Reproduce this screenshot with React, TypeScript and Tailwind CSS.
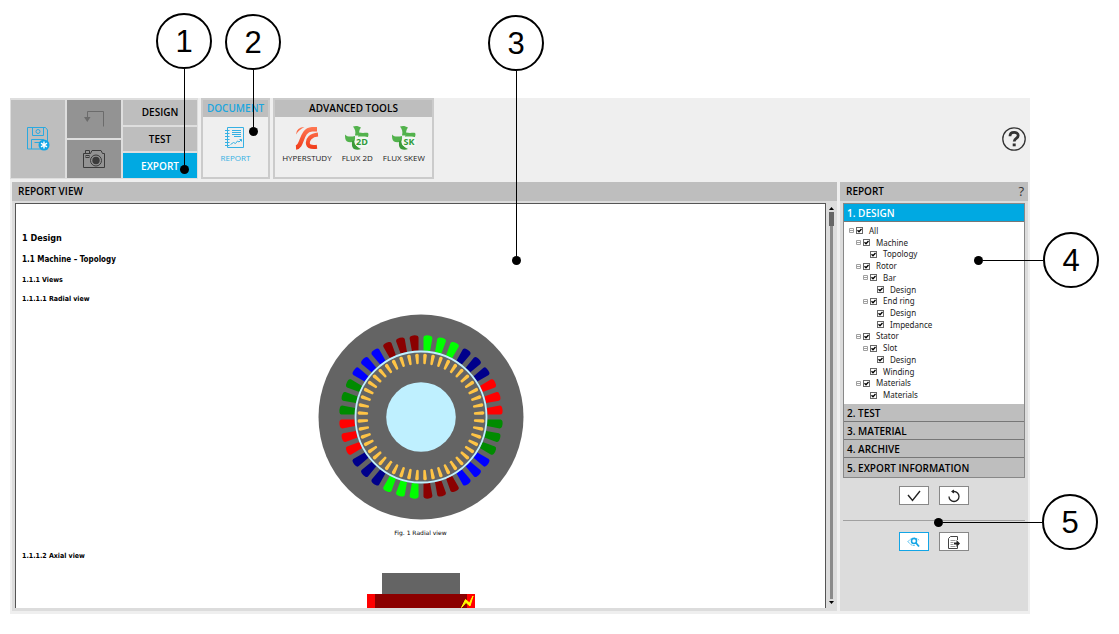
import React, { useState } from "react";

/* ---------- callouts ---------- */

function Badge({ n }: { n: number }) {
  return (
    <span className="flex size-14 shrink-0 items-center justify-center rounded-full border-2 border-black bg-white font-['Liberation_Sans',sans-serif] text-[31px] leading-none text-black">
      {n}
    </span>
  );
}

function Dot() {
  return <span className="size-[9px] shrink-0 rounded-full bg-black" />;
}

function DownCallout({ n, place }: { n: number; place: string }) {
  return (
    <div className={`pointer-events-none absolute flex flex-col items-center ${place}`}>
      <Badge n={n} />
      <span className="w-px flex-1 bg-black" />
      <Dot />
    </div>
  );
}

function SideCallout({ n, place }: { n: number; place: string }) {
  return (
    <div className={`pointer-events-none absolute flex items-center ${place}`}>
      <Dot />
      <span className="h-px flex-1 bg-black" />
      <Badge n={n} />
    </div>
  );
}

/* ---------- icons ---------- */

function SaveIcon() {
  return (
    <svg width="24" height="26" viewBox="0 0 24 26" fill="none" stroke="#2aa9e0" strokeWidth="1">
      <path d="M1.5 1.5h18l2 2.500v19h-20z" />
      <path d="M6.500 1.500v8h11v-8M5.500 23v-9.500h12v3M8.500 16.500h6" />
      <circle cx="12" cy="5.500" r="2" />
      <circle cx="18" cy="19" r="5.500" fill="#12a5e6" stroke="none" />
      <path d="M18 15.500v7M15 17.200l6 3.600M21 17.200l-6 3.600" stroke="#fff" strokeWidth="1.400" />
    </svg>
  );
}

function UndoIcon() {
  return (
    <svg width="22" height="18" viewBox="0 0 22 18" fill="none" stroke="#6b6b6b">
      <path d="M4.500 8V1.500h16v15" />
      <path d="M1 7h6.500l-3.200 5z" fill="#6b6b6b" stroke="none" />
    </svg>
  );
}

function CameraIcon() {
  return (
    <svg width="24" height="20" viewBox="0 0 24 20" fill="none" stroke="#3b3b3b">
      <path d="M1.500 4.500h7l1.500-3h9l1.500 3h2v14h-21zM3.500 4V1.500h4V4" />
      <rect x="4" y="6.500" width="3" height="2" />
      <circle cx="14" cy="11.500" r="5.500" />
      <circle cx="14" cy="11.500" r="3.700" fill="#3b3b3b" stroke="none" />
    </svg>
  );
}

function ReportIcon() {
  return (
    <svg width="20" height="24" viewBox="0 0 20 24" fill="none" stroke="#35b0e3">
      <path d="M2.500 1.500h16v20h-16z" />
      <path d="M0 4.500h4.500M0 7.500h4.500M0 10.500h4.500M0 13.500h4.500M0 16.500h4.500M0 19.500h4.500" strokeWidth="1.200" />
      <path d="M7 4.500h9M7 6.500h9M7 8.500h9M9 10.500h7" />
      <path d="M5.500 18.500l3-2 2 1 2-2.500 1.500 1 2.500-2.500M14.500 13.500h2v2" />
    </svg>
  );
}

function HyperStudyIcon() {
  return (
    <svg width="24" height="24" viewBox="0 0 24 24" fill="none">
      <defs>
        <linearGradient id="hs" gradientUnits="userSpaceOnUse" x1="0" y1="0" x2="0" y2="24">
          <stop offset="0" stopColor="#ff7a55" />
          <stop offset="1" stopColor="#f03a18" />
        </linearGradient>
      </defs>
      <path d="M1 8.500Q1.500 1 9.500 1 4 3.500 1 8.500z" fill="url(#hs)" />
      <path d="M1 21.500C8 21 5.500 4 17 3.200h5" stroke="url(#hs)" strokeWidth="4.400" />
      <path d="M23 8.500C16 9 12 13.500 13 18q.8 3.800 9 2.800" stroke="url(#hs)" strokeWidth="4" />
    </svg>
  );
}

function FluxIcon({ tag }: { tag: string }) {
  return (
    <svg width="26" height="26" viewBox="0 0 26 26">
      <g fill="#52b24c">
        <path d="M9 1.500c3-1 5.500-.5 8 1-2 2-2 5-2 8h-4c1-4 0-6.500-2-9z" />
        <path d="M1 9.500c2 2.500 6 2.500 10 1.500v5c-3 1.500-6 1.500-8 .5-2-1.500-2-4.500-2-7z" />
        <path d="M10.500 15c0 4 2.500 7.500 6.500 9-2 1-5 1-7 0-2.500-2-2-5-2-8z" fill="#3b9a38" />
        <path d="M15 7.500c4 1 7 0 9 .5 1 1 0 4 0 4H14z" />
      </g>
      <rect x="10.500" y="11.500" width="15" height="10.500" rx="5" fill="#f3f7f2" />
      <text x="18" y="20" textAnchor="middle" fontSize="9" fontWeight="700" fontFamily="Open Sans, sans-serif" fill="#2f9a3a">
        {tag}
      </text>
    </svg>
  );
}

function HelpIcon() {
  return (
    <svg width="24" height="24" viewBox="0 0 24 24" fill="none" stroke="#333">
      <circle cx="12" cy="12" r="11.200" strokeWidth="1.300" />
      <path d="M8 9.200c0-5 8.200-4.800 8.200-.6 0 3-4 2.800-4 6" strokeWidth="2.800" />
      <rect x="10.700" y="16.500" width="3" height="2.800" fill="#333" stroke="none" />
    </svg>
  );
}

function CheckIcon() {
  return (
    <svg width="14" height="12" viewBox="0 0 14 12" fill="none" stroke="#222" strokeWidth="1.400">
      <path d="M1 5l4.500 5.500L13 1" />
    </svg>
  );
}

function ResetIcon() {
  return (
    <svg width="14" height="14" viewBox="0 0 14 14" fill="none" stroke="#222" strokeWidth="1.300">
      <path d="M2 7.500A5 5 0 1 0 7 2.500H5" />
      <path d="M7 .5L4 2.500 7 4.500z" fill="#222" stroke="none" />
    </svg>
  );
}

function PreviewIcon() {
  return (
    <svg width="14" height="12" viewBox="0 0 14 12" fill="none" stroke="#12a5e6">
      <path d="M1 5.500Q6.500-1 12.500 4.500M1 5.500Q4 10 8 9.500" strokeWidth=".8" strokeDasharray="1.500 .7" />
      <circle cx="7" cy="5" r="2.500" strokeWidth="1.500" />
      <path d="M9 7l3 3.500" strokeWidth="1.800" />
    </svg>
  );
}

function ExportIcon() {
  return (
    <svg width="14" height="14" viewBox="0 0 14 14" fill="none" stroke="#444">
      <path d="M10.500 5V1.500h-7l-2 2v10h9V11" />
      <path d="M3.500 5.500h5M3.500 7.500h3M3.500 9.500h3M3.500 11.500h5" stroke="#999" />
      <path d="M7 7.500h2.500V5L13 8.500 9.500 12V9.500H7z" fill="#222" stroke="none" />
    </svg>
  );
}

/* ---------- drawings ---------- */

const PHASES = ["#00ff00", "#00008b", "#ff0000", "#008b00", "#0000ff", "#8b0000"];

function RadialView() {
  return (
    <svg width="206" height="206" viewBox="-103 -103 206 206" role="img" aria-label="Radial view">
      <circle r="102.500" fill="#646464" />
      {Array.from({ length: 36 }, (_, i) => (
        <path
          key={i}
          transform={`rotate(${5 + i * 10})`}
          d="M-4.500-79.500Q-4.400-81.200-2.500-81.600Q0-82.200 2.500-81.600Q4.400-81.200 4.500-79.500L3.300-66.500H-3.300z"
          fill={PHASES[Math.floor(i / 3) % 6]}
        />
      ))}
      <circle r="65.500" fill="none" stroke="#bff0ff" strokeWidth="1.800" />
      {Array.from({ length: 48 }, (_, i) => (
        <path
          key={i}
          transform={`rotate(${3.75 + i * 7.5})`}
          d="M-1.800-62Q-1.600-63.500 0-63.500Q1.600-63.500 1.800-62L1.200-53.500Q0-52.300-1.200-53.500z"
          fill="#ffc445"
        />
      ))}
      <circle r="34.800" fill="#bff0ff" />
    </svg>
  );
}

function AxialView() {
  return (
    <svg width="108" height="35" viewBox="0 0 108 35" role="img" aria-label="Axial view">
      <rect x="15" width="78" height="21" fill="#646464" />
      <rect y="21" width="108" height="14" fill="#ff0000" />
      <rect x="8" y="21" width="92" height="14" fill="#8b0000" />
      <path d="M94.500 34.500l4-8 4 3.500 3.500-7-3 10-4-3.500z" fill="#ff0" stroke="#ff0" />
    </svg>
  );
}

/* ---------- ribbon ---------- */

function Tab({ label, active }: { label: string; active?: boolean }) {
  return (
    <button
      className={`flex flex-1 items-center justify-center pt-px text-[10px] font-semibold ${
        active ? "bg-[#00a9e2] text-white" : "bg-[#bebebe] text-black"
      }`}
    >
      {label}
    </button>
  );
}

function Group({ title, titleColor, width, children }: { title: string; titleColor: string; width: string; children: React.ReactNode }) {
  return (
    <section className={`flex flex-col border-2 border-[#cbcbcb] ${width}`}>
      <h2 className={`flex h-[17px] items-center justify-center bg-[#bebebe] text-[10px] font-semibold ${titleColor}`}>{title}</h2>
      <div className="flex justify-center gap-2.5 pt-[7px]">{children}</div>
    </section>
  );
}

function Tool({ label, color, children }: { label: string; color: string; children: React.ReactNode }) {
  return (
    <button className={`flex flex-col items-center text-[8px] leading-3 ${color}`}>
      <span className="flex h-7 items-center">{children}</span>
      {label}
    </button>
  );
}

function Ribbon() {
  return (
    <header className="flex items-center justify-between pr-1">
      <nav className="flex h-[81px] gap-[3px]">
        <div className="grid grid-cols-[54px_54px_74px] gap-0.5 bg-[#dedede] p-px pt-0.5">
          <button aria-label="Save" className="flex items-center justify-center bg-[#bebebe]">
            <SaveIcon />
          </button>
          <div className="flex flex-col gap-0.5">
            <button aria-label="Undo" className="flex flex-1 items-center justify-center bg-[#939393]">
              <UndoIcon />
            </button>
            <button aria-label="Screenshot" className="flex flex-1 items-center justify-center bg-[#939393]">
              <CameraIcon />
            </button>
          </div>
          <div className="flex flex-col gap-0.5">
            <Tab label="DESIGN" />
            <Tab label="TEST" />
            <Tab label="EXPORT" active />
          </div>
        </div>
        <Group title="DOCUMENT" titleColor="text-[#1ba6de]" width="w-[69px]">
          <Tool label="REPORT" color="text-[#35b0e3]">
            <ReportIcon />
          </Tool>
        </Group>
        <Group title="ADVANCED TOOLS" titleColor="text-black" width="w-[161px]">
          <Tool label="HYPERSTUDY" color="text-[#222]">
            <HyperStudyIcon />
          </Tool>
          <Tool label="FLUX 2D" color="text-[#222]">
            <FluxIcon tag="2D" />
          </Tool>
          <Tool label="FLUX SKEW" color="text-[#222]">
            <FluxIcon tag="SK" />
          </Tool>
        </Group>
      </nav>
      <button aria-label="Help">
        <HelpIcon />
      </button>
    </header>
  );
}

/* ---------- report view ---------- */

function ReportView() {
  return (
    <section className="flex min-w-0 flex-1 flex-col bg-[#dcdcdc]">
      <h2 className="flex h-[19px] items-center bg-[#bebebe] px-1.5 text-[10px] font-semibold">REPORT VIEW</h2>
      <div className="flex flex-1 px-[3px] pt-[2px] pb-[3px]">
        <article className="flex flex-1 flex-col border border-b-0 border-[#555] bg-white px-1.5 pt-7 font-['DejaVu_Sans_Condensed','DejaVu_Sans',sans-serif] font-bold text-black">
          <h3 className="text-[9px] leading-3">1 Design</h3>
          <h4 className="mt-2.5 text-[8px] leading-3">1.1 Machine – Topology</h4>
          <h5 className="mt-2 text-[7px] leading-3">1.1.1 Views</h5>
          <h6 className="mt-[7px] text-[7px] leading-3">1.1.1.1 Radial view</h6>
          <figure className="mt-[9px] flex flex-col items-center">
            <RadialView />
            <figcaption className="mt-[7px] font-['DejaVu_Sans',sans-serif] text-[6px] leading-3 font-normal">Fig. 1 Radial view</figcaption>
          </figure>
          <h6 className="mt-[11px] text-[7px] leading-3">1.1.1.2 Axial view</h6>
          <div className="mt-[11px] flex justify-center">
            <AxialView />
          </div>
        </article>
        <div className="ml-[3px] flex w-[5px] flex-col items-center py-1">
          <svg width="5" height="3" viewBox="0 0 5 3">
            <path d="M0 3L2.500 0 5 3z" />
          </svg>
          <span className="mt-0.5 h-[14px] w-[5px] bg-[#666]" />
          <span className="w-[3px] flex-1 bg-[#8a8a8a]" />
          <svg className="mt-0.5" width="5" height="3" viewBox="0 0 5 3">
            <path d="M0 0h5L2.500 3z" />
          </svg>
        </div>
      </div>
    </section>
  );
}

/* ---------- report panel ---------- */

type Node = { label: string; indent: string; open?: boolean };

const L0 = "pl-0";
const L1 = "pl-[7px]";
const L2 = "pl-[14px]";
const L3 = "pl-[21px]";

const TREE: Node[] = [
  { label: "All", indent: L0, open: true },
  { label: "Machine", indent: L1, open: true },
  { label: "Topology", indent: L2 },
  { label: "Rotor", indent: L1, open: true },
  { label: "Bar", indent: L2, open: true },
  { label: "Design", indent: L3 },
  { label: "End ring", indent: L2, open: true },
  { label: "Design", indent: L3 },
  { label: "Impedance", indent: L3 },
  { label: "Stator", indent: L1, open: true },
  { label: "Slot", indent: L2, open: true },
  { label: "Design", indent: L3 },
  { label: "Winding", indent: L2 },
  { label: "Materials", indent: L1, open: true },
  { label: "Materials", indent: L2 },
];

function TreeRow({ node }: { node: Node }) {
  const [checked, setChecked] = useState(true);
  return (
    <li className={`flex flex-1 items-center ${node.indent}`}>
      <span className="flex w-[7px] shrink-0">
        {node.open && (
          <svg width="5" height="5" viewBox="0 0 5 5">
            <path d="M.5.500h4v4h-4zM1 2.500h3" fill="none" stroke="#a0a0a0" />
          </svg>
        )}
      </span>
      <label className="flex items-center gap-1.5 font-['Noto_Sans','Open_Sans',sans-serif] text-[8px] leading-none text-[#222]">
        <span className="grid">
          <input
            type="checkbox"
            checked={checked}
            onChange={(e) => setChecked(e.target.checked)}
            className="col-start-1 row-start-1 size-[7px] appearance-none border border-[#666] bg-white"
          />
          {checked && (
            <svg className="pointer-events-none col-start-1 row-start-1" width="7" height="7" viewBox="0 0 7 7">
              <path d="M1.500 3.300L3 4.800 5.500 2" fill="none" stroke="#000" strokeWidth="1.300" />
            </svg>
          )}
        </span>
        {node.label}
      </label>
    </li>
  );
}

const SECTIONS = ["2. TEST", "3. MATERIAL", "4. ARCHIVE", "5. EXPORT INFORMATION"];

function ActionButton({ label, active, children }: { label: string; active?: boolean; children: React.ReactNode }) {
  return (
    <button
      aria-label={label}
      className={`flex h-[19px] w-[30px] items-center justify-center border bg-white ${active ? "border-[#12a5e6]" : "border-[#888]"}`}
    >
      {children}
    </button>
  );
}

function ReportPanel() {
  return (
    <aside className="flex w-[188px] shrink-0 flex-col bg-[#dcdcdc]">
      <div className="flex h-[19px] items-center justify-between bg-[#bebebe] pr-1 pl-1.5">
        <h2 className="text-[10px] font-semibold">REPORT</h2>
        <button aria-label="Report help" className="text-[13px] leading-none text-[#333]">
          ?
        </button>
      </div>
      <div className="flex flex-col px-[3px] pt-0.5">
        <div className="flex flex-col border border-[#888] text-[10px] font-semibold">
          <button className="h-[18px] border-b border-[#777] bg-[#00a9e2] pl-[3px] text-left leading-4 text-white">1. DESIGN</button>
          <ul className="flex h-[182px] flex-col bg-white pt-[3px] pr-1 pb-[3px] pl-[5px] font-normal">
            {TREE.map((node, i) => (
              <TreeRow key={i} node={node} />
            ))}
          </ul>
          {SECTIONS.map((s) => (
            <button key={s} className="h-[18px] border-b border-[#777] bg-[#bebebe] pl-[3px] text-left leading-4 last:h-[19px] last:border-b-0">
              {s}
            </button>
          ))}
        </div>
        <div className="mt-2 flex justify-center gap-2.5">
          <ActionButton label="Apply">
            <CheckIcon />
          </ActionButton>
          <ActionButton label="Reset">
            <ResetIcon />
          </ActionButton>
        </div>
        <hr className="mt-[15px] border-t border-[#a0a0a0]" />
        <div className="mt-[11px] flex justify-center gap-2.5">
          <ActionButton label="Preview" active>
            <PreviewIcon />
          </ActionButton>
          <ActionButton label="Export report">
            <ExportIcon />
          </ActionButton>
        </div>
      </div>
    </aside>
  );
}

export default function App() {
  return (
    <div className="relative min-h-screen bg-white pt-[98px] pr-[89px] pb-5 pl-2.5 font-['Open_Sans',sans-serif] text-black">
      <main className="bg-[#efefef] pb-[3px]">
        <Ribbon />
        <div className="mt-[3px] flex gap-[3px] pr-0.5 pl-0.5">
          <ReportView />
          <ReportPanel />
        </div>
      </main>
      <DownCallout n={1} place="left-[156px] top-[13px] h-[161px]" />
      <DownCallout n={2} place="left-[225px] top-[14px] h-[122px]" />
      <DownCallout n={3} place="left-[488px] top-[15px] h-[250px]" />
      <SideCallout n={4} place="right-[20px] top-[232px] w-[125px]" />
      <SideCallout n={5} place="right-[21px] top-[494px] w-[164px]" />
    </div>
  );
}
